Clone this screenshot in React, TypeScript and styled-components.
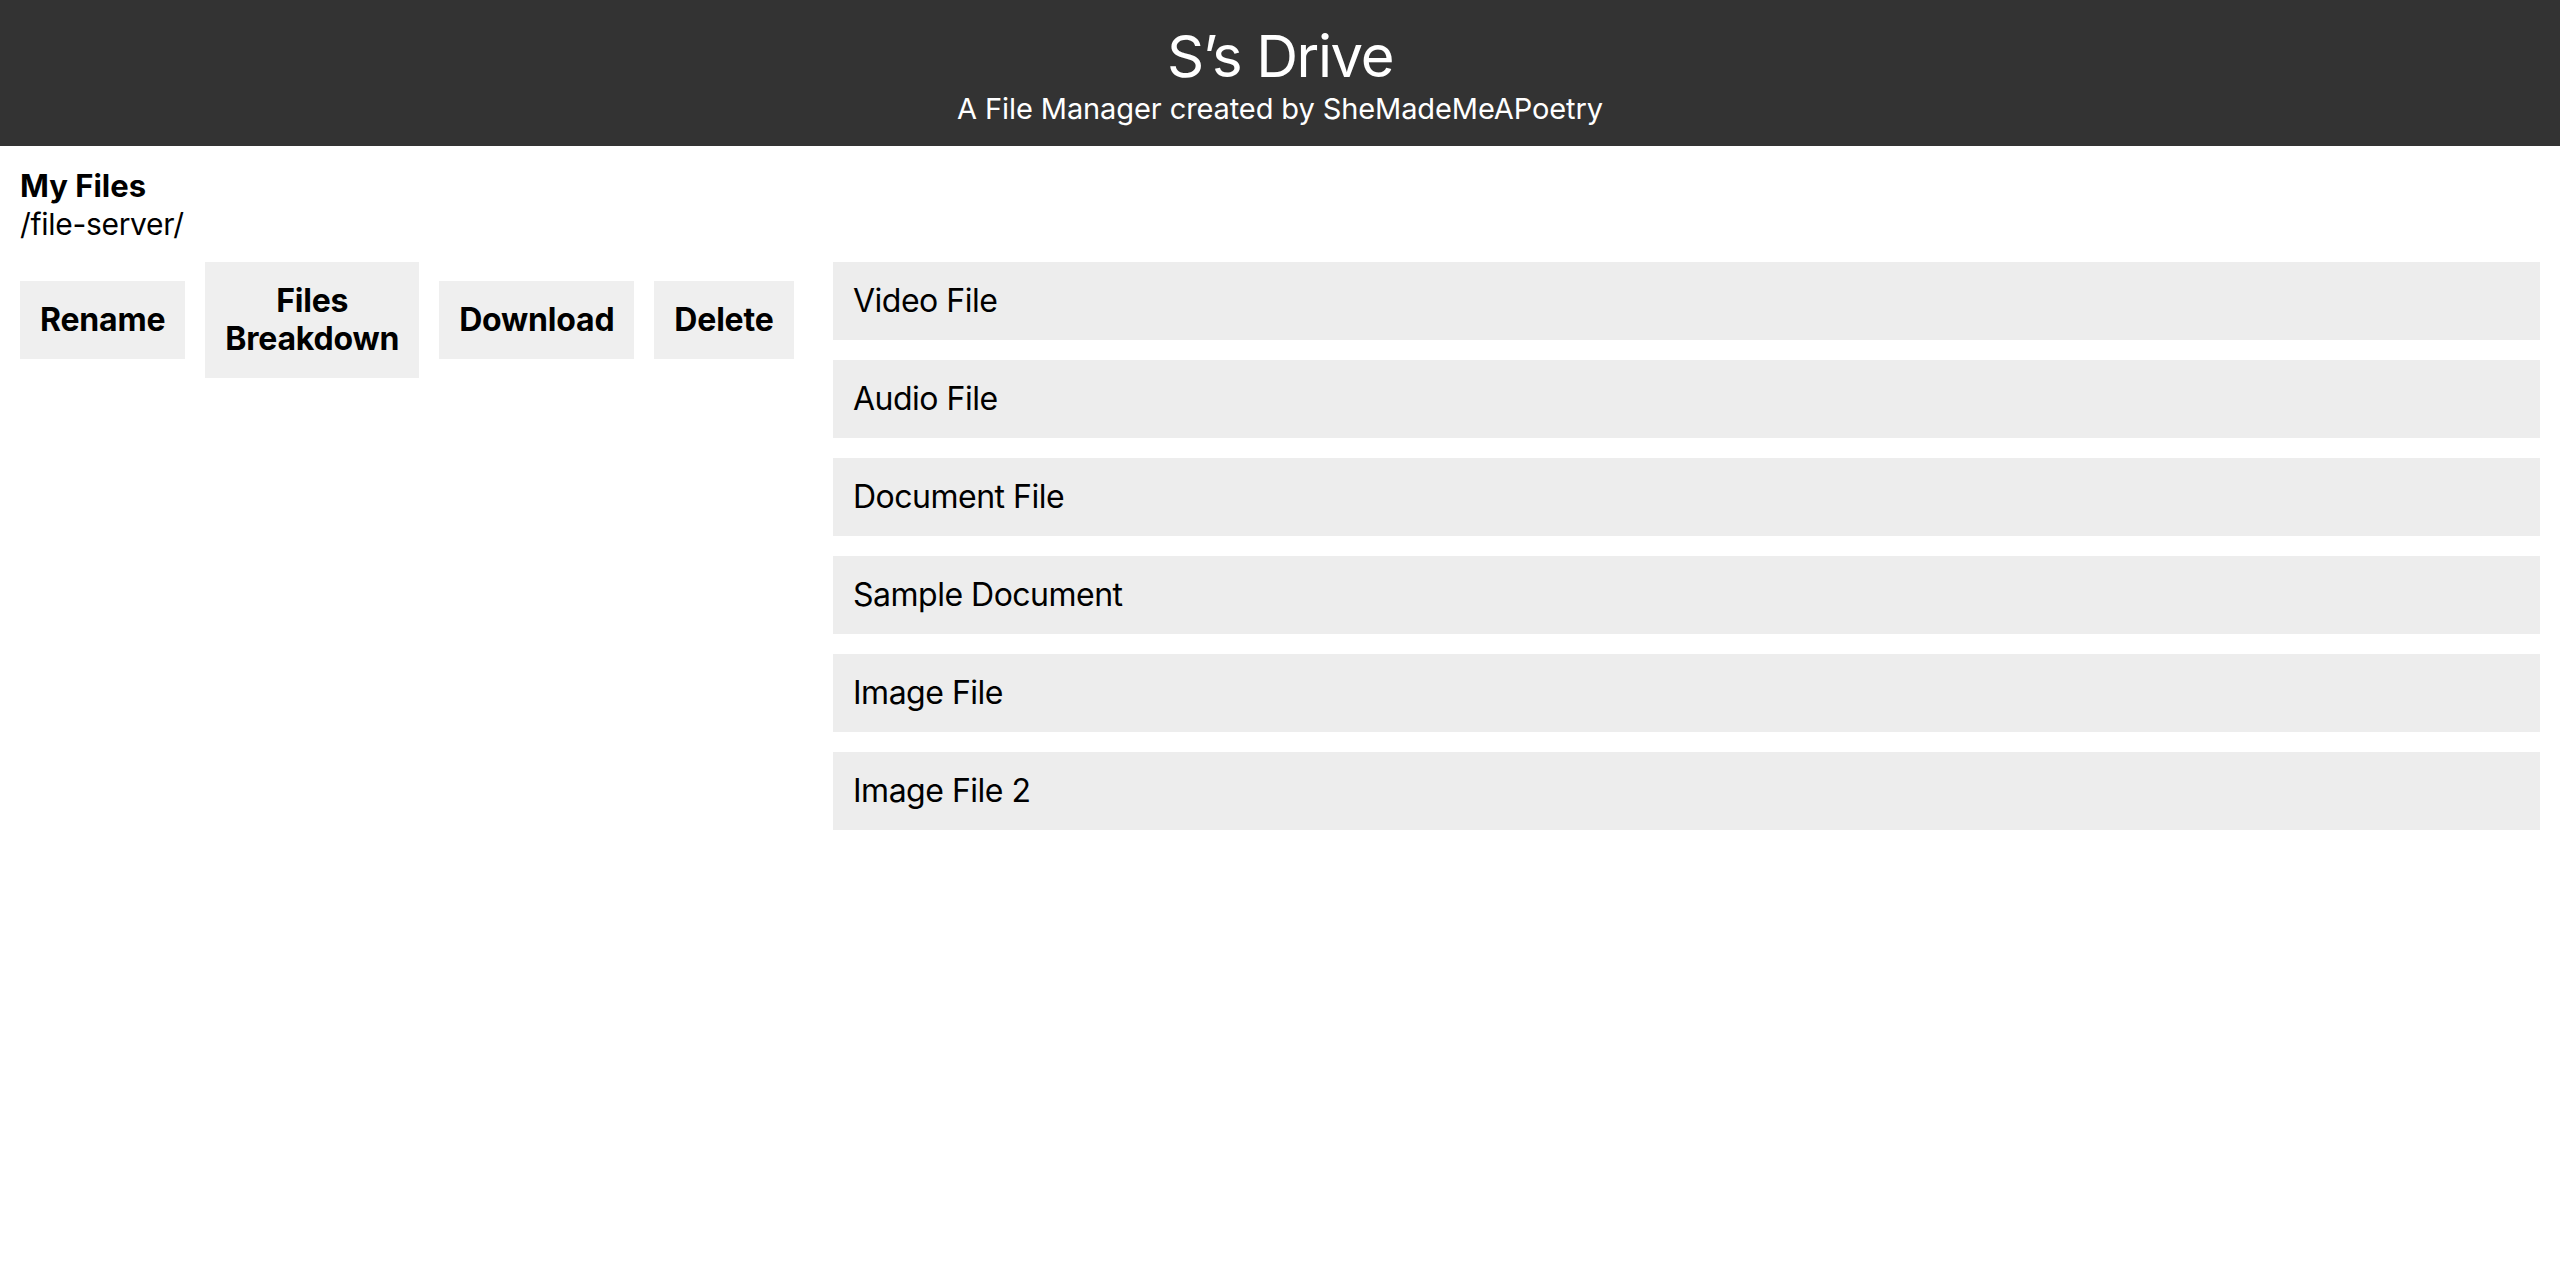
import React from "react";
import styled, { createGlobalStyle } from "styled-components";

const GlobalStyle = createGlobalStyle`
  html, body {
    margin: 0;
    padding: 0;
    background: #ffffff;
  }
  body {
    font-family: Inter, "Noto Sans", "Liberation Sans", sans-serif;
    color: #000000;
  }
  * { box-sizing: border-box; }
`;

const Header = styled.header`
  background: #333333;
  color: #ffffff;
  height: 146px;
  padding: 21px 20px 0;
  display: flex;
  flex-direction: column;
  align-items: center;
`;

const Title = styled.h1`
  margin: 0;
  font-size: 58px;
  line-height: 70px;
  font-weight: 400;
  letter-spacing: -1.4px;
`;

const Subtitle = styled.p`
  margin: 1px 0 0;
  font-size: 29px;
  line-height: 34px;
  font-weight: 400;
  letter-spacing: -0.1px;
`;

const Main = styled.main`
  padding: 21px 20px 20px;
`;

const Heading = styled.h2`
  margin: 0;
  font-size: 31px;
  line-height: 38px;
  font-weight: 700;
  letter-spacing: 0;
`;

const Path = styled.div`
  font-size: 30px;
  line-height: 38px;
  font-weight: 400;
  letter-spacing: -0.3px;
`;

const Workspace = styled.div`
  margin-top: 19px;
  display: grid;
  grid-template-columns: 793px 1fr;
  gap: 20px;
  align-items: start;
`;

const Toolbar = styled.div`
  display: flex;
  align-items: center;
  gap: 20px;
`;

const ActionButton = styled.button<{ $narrow?: boolean }>`
  border: none;
  background: #efefef;
  padding: 20px;
  font-family: inherit;
  font-size: 32px;
  line-height: 38px;
  font-weight: 700;
  color: #000000;
  letter-spacing: -0.2px;
  text-align: center;
  cursor: pointer;
  width: ${(p) => (p.$narrow ? "min-content" : "auto")};
`;

const FileList = styled.ul`
  list-style: none;
  margin: 0;
  padding: 0;
  display: flex;
  flex-direction: column;
  gap: 20px;
`;

const FileItem = styled.li`
  background: #ededed;
  padding: 20px;
  font-size: 32px;
  line-height: 38px;
  font-weight: 400;
  letter-spacing: -0.5px;
`;

const files = [
  "Video File",
  "Audio File",
  "Document File",
  "Sample Document",
  "Image File",
  "Image File 2",
];

export default function App() {
  return (
    <>
      <GlobalStyle />
      <Header>
        <Title>S’s Drive</Title>
        <Subtitle>A File Manager created by SheMadeMeAPoetry</Subtitle>
      </Header>
      <Main>
        <Heading>My Files</Heading>
        <Path>/file-server/</Path>
        <Workspace>
          <Toolbar>
            <ActionButton>Rename</ActionButton>
            <ActionButton $narrow>Files Breakdown</ActionButton>
            <ActionButton>Download</ActionButton>
            <ActionButton>Delete</ActionButton>
          </Toolbar>
          <FileList>
            {files.map((f) => (
              <FileItem key={f}>{f}</FileItem>
            ))}
          </FileList>
        </Workspace>
      </Main>
    </>
  );
}
